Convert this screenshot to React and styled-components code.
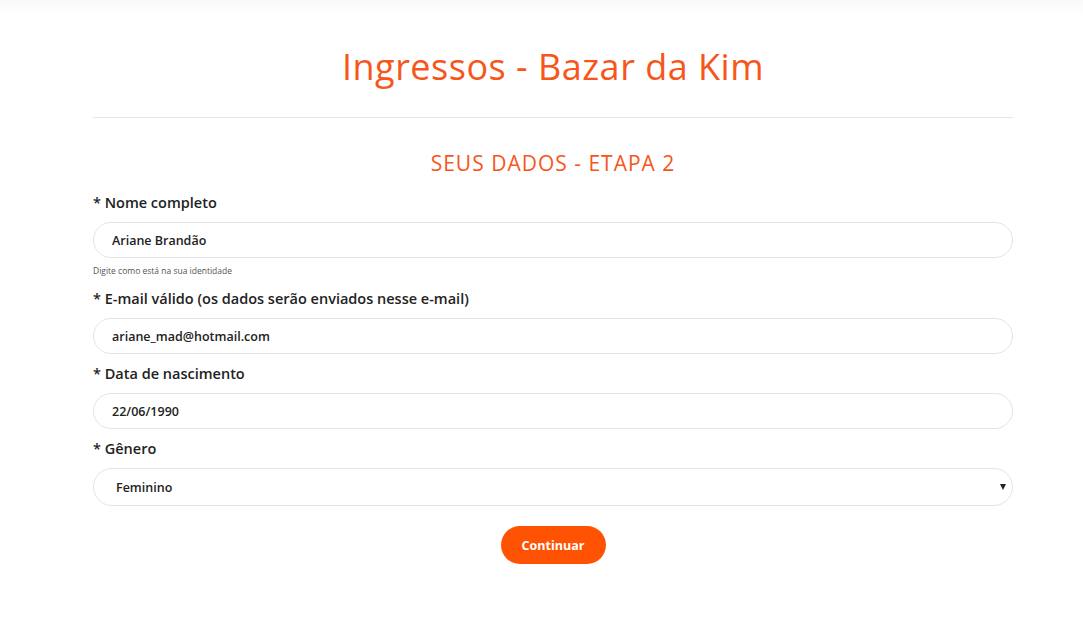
import React, { useState } from 'react'
import styled, { createGlobalStyle } from 'styled-components'

const GlobalStyle = createGlobalStyle`
  html, body {
    margin: 0;
    padding: 0;
    background: #fff;
    font-family: "Open Sans", "Liberation Sans", sans-serif;
  }
`

const Page = styled.div`
  min-height: 629px;
  background: linear-gradient(#f9f9f9, #fff 16px);
`

const Container = styled.div`
  width: 920px;
  margin-left: 93px;
  padding-top: 44px;
`

const Title = styled.h1`
  margin: 0;
  text-align: center;
  color: #f7561a;
  font-size: 36px;
  font-weight: 400;
  line-height: 46px;
  letter-spacing: 0.5px;
`

const Divider = styled.hr`
  border: 0;
  border-top: 1px solid #e6e6e6;
  margin: 27px 0 32px;
`

const SubTitle = styled.h2`
  margin: 0 0 17px;
  text-align: center;
  color: #f7561a;
  font-size: 21px;
  font-weight: 400;
  line-height: 26px;
  letter-spacing: 1px;
`

const Field = styled.div`
  display: flex;
  flex-direction: column;
  margin-bottom: ${(p) => p.$gap ?? 10}px;
`

const Label = styled.label`
  font-size: 14.5px;
  font-weight: 600;
  color: #222;
  line-height: 20px;
  margin-bottom: 9px;
`

const Input = styled.input`
  box-sizing: border-box;
  height: 36px;
  border: 1px solid #e4e4e4;
  border-radius: 18px;
  padding: 0 18px;
  font-family: inherit;
  font-size: 12.5px;
  font-weight: 600;
  color: #222;
  background: #fff;
  outline: none;
`

const Hint = styled.small`
  font-size: 8.5px;
  color: #555;
  margin-top: 7px;
  line-height: 12px;
`

const SelectWrap = styled.div`
  position: relative;
`

const Select = styled.select`
  box-sizing: border-box;
  width: 100%;
  height: 38px;
  border: 1px solid #e4e4e4;
  border-radius: 19px;
  padding: 0 22px;
  font-family: inherit;
  font-size: 12.5px;
  font-weight: 600;
  color: #222;
  background: #fff;
  appearance: none;
  outline: none;
`

const Caret = styled.span`
  position: absolute;
  right: 7px;
  top: 16px;
  width: 0;
  height: 0;
  border-left: 3.5px solid transparent;
  border-right: 3.5px solid transparent;
  border-top: 6px solid #222;
  pointer-events: none;
`

const Actions = styled.div`
  display: flex;
  justify-content: center;
  margin-top: 20px;
`

const Button = styled.button`
  width: 105px;
  height: 38px;
  border: 0;
  border-radius: 19px;
  background: #ff5203;
  color: #fff;
  font-family: inherit;
  font-size: 12.5px;
  font-weight: 700;
  cursor: pointer;
`

const App = () => {
  const [formData, setFormData] = useState({
    nome: 'Ariane Brandão',
    email: 'ariane_mad@hotmail.com',
    nascimento: '22/06/1990',
    genero: 'Feminino',
  })

  const handleChange = (e) => {
    setFormData((prev) => ({ ...prev, [e.target.name]: e.target.value }))
  }

  return (
    <>
      <GlobalStyle />
      <Page>
        <Container>
          <Title>Ingressos - Bazar da Kim</Title>
          <Divider />
          <SubTitle>SEUS DADOS - ETAPA 2</SubTitle>

          <Field $gap={12}>
            <Label>* Nome completo</Label>
            <Input name="nome" value={formData.nome} onChange={handleChange} />
            <Hint>Digite como está na sua identidade</Hint>
          </Field>

          <Field>
            <Label>* E-mail válido (os dados serão enviados nesse e-mail)</Label>
            <Input name="email" value={formData.email} onChange={handleChange} />
          </Field>

          <Field>
            <Label>* Data de nascimento</Label>
            <Input name="nascimento" value={formData.nascimento} onChange={handleChange} />
          </Field>

          <Field $gap={0}>
            <Label>* Gênero</Label>
            <SelectWrap>
              <Select name="genero" value={formData.genero} onChange={handleChange}>
                <option>Feminino</option>
                <option>Masculino</option>
                <option>Outro</option>
              </Select>
              <Caret />
            </SelectWrap>
          </Field>

          <Actions>
            <Button type="button">Continuar</Button>
          </Actions>
        </Container>
      </Page>
    </>
  )
}

export default App
